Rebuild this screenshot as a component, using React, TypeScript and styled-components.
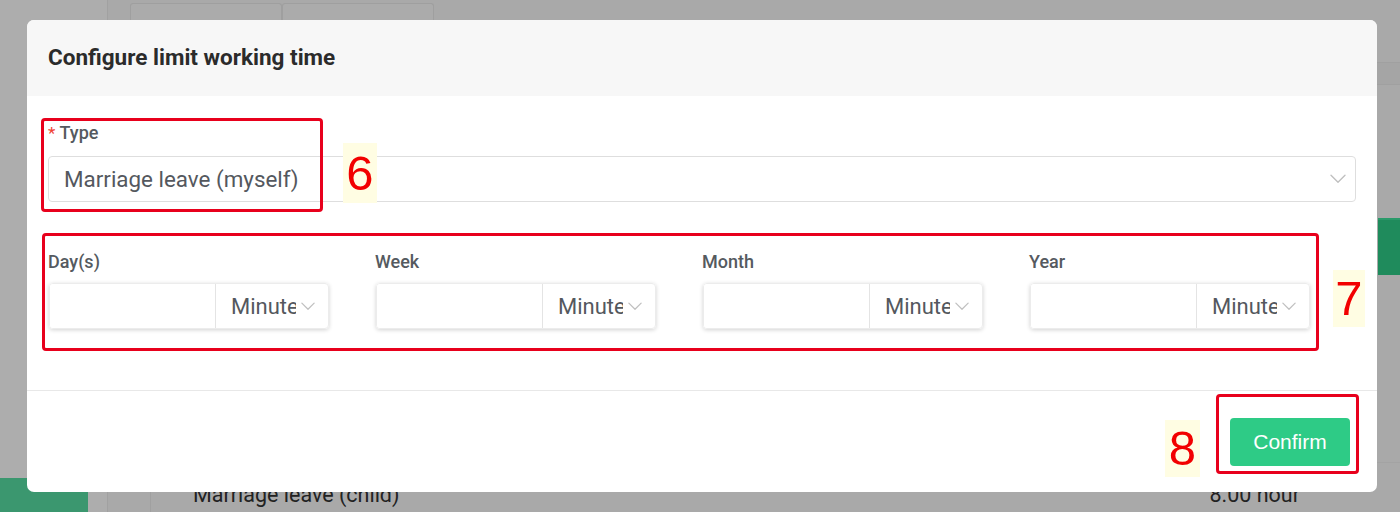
import React from "react";
import styled, { createGlobalStyle } from "styled-components";

const GlobalStyle = createGlobalStyle`
  html, body { margin: 0; padding: 0; }
  body {
    width: 1400px;
    height: 512px;
    overflow: hidden;
    background: #a9a9a9;
    font-family: Roboto, "Liberation Sans", sans-serif;
  }
  * { box-sizing: border-box; }
`;

const Page = styled.div`
  position: relative;
  width: 1400px;
  height: 512px;
  overflow: hidden;
  display: flex;
  background: #a9a9a9;
`;

const Sidebar = styled.aside`
  width: 108px;
  flex: none;
  background: #adadad;
  border-right: 1px solid #a1a1a1;
  display: flex;
  flex-direction: column;
  justify-content: flex-end;
`;

const SidebarActive = styled.div`
  width: 88px;
  height: 34px;
  background: #3b976f;
`;

const Main = styled.main`
  flex: 1;
  display: flex;
  flex-direction: column;
  padding: 3px 0 0 22px;
  min-width: 0;
`;

const Tabs = styled.div`
  display: flex;
`;

const Tab = styled.div`
  width: 152px;
  height: 30px;
  border: 1px solid #9f9f9f;
  border-bottom: none;
  border-radius: 3px 3px 0 0;
  background: #ababab;
`;

const Content = styled.div`
  flex: 1;
  display: flex;
  flex-direction: column;
  min-height: 0;
`;

const HeaderStrip = styled.div`
  margin-top: 29px;
  height: 23px;
  border-top: 1px solid #a0a0a0;
  border-bottom: 1px solid #a0a0a0;
  background: #a5a5a5;
`;

const Toolbar = styled.div`
  margin-top: 133px;
  display: flex;
  justify-content: flex-end;
`;

const AddButton = styled.div`
  width: 22px;
  height: 57px;
  background: #1f8b5c;
  border-top: 2px solid #2a9a6a;
`;

const Table = styled.div`
  margin-top: auto;
  margin-left: 20px;
  border-left: 1px solid #a0a0a0;
  display: flex;
  flex-direction: column;
`;

const TableRow = styled.div`
  height: 50px;
  display: flex;
  align-items: flex-start;
  justify-content: space-between;
  padding: 20px 100px 0 42px;
  border-top: 1px solid #a3a3a3;
  font-size: 21.5px;
  color: #222;
  line-height: 24px;
  white-space: nowrap;
`;

const Mask = styled.div`
  position: absolute;
  inset: 0;
  padding: 20px 23px 20px 27px;
  display: flex;
`;

const Modal = styled.div`
  position: relative;
  flex: 1;
  display: flex;
  flex-direction: column;
  background: #fff;
  border-radius: 7px;
  overflow: hidden;
`;

const ModalHeader = styled.header`
  height: 76px;
  flex: none;
  display: flex;
  align-items: center;
  padding: 0 21px;
  background: #f7f7f7;
`;

const Title = styled.h2`
  margin: 0;
  font-size: 22.5px;
  font-weight: 700;
  color: #2b2b2b;
  margin-top: -2px;
`;

const ModalBody = styled.div`
  flex: 1;
  padding: 25px 21px 0;
  display: flex;
  flex-direction: column;
`;

const FieldLabel = styled.label<{ $required?: boolean }>`
  display: block;
  font-size: 18px;
  font-weight: 500;
  line-height: 24px;
  color: #555a60;
  margin-bottom: ${(p) => (p.$required ? "11px" : "9px")};
  &::before {
    content: ${(p) => (p.$required ? '"* "' : '""')};
    color: #f04134;
    font-weight: 400;
    font-size: 17px;
  }
`;

const SelectBox = styled.div`
  height: 46px;
  display: flex;
  align-items: center;
  justify-content: space-between;
  padding: 0 9px 0 15px;
  border: 1px solid #dedede;
  border-radius: 4px;
  font-size: 22.4px;
  color: #54585e;
`;

const LimitsGrid = styled.div`
  margin-top: 48px;
  display: grid;
  grid-template-columns: repeat(4, 281px);
  column-gap: 46px;
`;

const InputGroup = styled.div`
  height: 46px;
  margin-left: 1px;
  display: flex;
  border: 1px solid #ececec;
  border-radius: 4px;
  box-shadow: 0 1px 4px rgba(0, 0, 0, 0.18);
  overflow: hidden;
`;

const NumberInput = styled.input`
  width: 165px;
  border: none;
  outline: none;
  font-size: 20px;
  padding: 0 12px;
  background: #fff;
`;

const UnitSelect = styled.div`
  flex: 1;
  display: flex;
  align-items: center;
  padding: 0 9px 0 15px;
  border-left: 1px solid #e4e4e4;
  font-size: 22px;
  color: #54585e;
  gap: 5px;
`;

const UnitText = styled.span`
  width: 65px;
  overflow: hidden;
  white-space: nowrap;
`;

const ModalFooter = styled.footer`
  height: 102px;
  flex: none;
  display: flex;
  align-items: center;
  justify-content: flex-end;
  padding-right: 27px;
  border-top: 1px solid #e8e8e8;
`;

const ConfirmButton = styled.button`
  width: 120px;
  height: 48px;
  border: none;
  border-radius: 4px;
  background: #2ecb86;
  color: #fff;
  font-family: "Liberation Sans", Arial, sans-serif;
  font-size: 21px;
  cursor: pointer;
`;

const Annotation = styled.div<{ $l: number; $t: number; $w: number; $h: number }>`
  position: absolute;
  left: ${(p) => p.$l}px;
  top: ${(p) => p.$t}px;
  width: ${(p) => p.$w}px;
  height: ${(p) => p.$h}px;
  border: 3px solid #e8001c;
  border-radius: 4px;
  pointer-events: none;
`;

const Tag = styled.div<{ $l: number; $t: number; $w: number; $h: number }>`
  position: absolute;
  left: ${(p) => p.$l}px;
  top: ${(p) => p.$t}px;
  width: ${(p) => p.$w}px;
  height: ${(p) => p.$h}px;
  background: #fffde3;
  color: #f20000;
  font-family: "Liberation Sans", Arial, sans-serif;
  font-size: 49px;
  line-height: 1;
  display: flex;
  align-items: center;
  justify-content: center;
`;

const Chevron = ({ w = 15 }: { w?: number }) => (
  <svg width={w} height={w * 0.6} viewBox="0 0 16 9" fill="none">
    <path d="M1 1l7 7 7-7" stroke="#c0c0c0" strokeWidth="1.4" strokeLinecap="round" strokeLinejoin="round" />
  </svg>
);

const periods = ["Day(s)", "Week", "Month", "Year"];

export default function App() {
  return (
    <>
      <GlobalStyle />
      <Page>
        <Sidebar>
          <SidebarActive />
        </Sidebar>
        <Main>
          <Tabs>
            <Tab />
            <Tab />
          </Tabs>
          <Content>
            <HeaderStrip />
            <Toolbar>
              <AddButton />
            </Toolbar>
            <Table>
              <TableRow>
                <span>Marriage leave (child)</span>
                <span>8.00 hour</span>
              </TableRow>
            </Table>
          </Content>
        </Main>

        <Mask>
          <Modal>
            <ModalHeader>
              <Title>Configure limit working time</Title>
            </ModalHeader>
            <ModalBody>
              <div>
                <FieldLabel $required>Type</FieldLabel>
                <SelectBox>
                  <span>Marriage leave (myself)</span>
                  <Chevron w={16} />
                </SelectBox>
              </div>
              <LimitsGrid>
                {periods.map((p) => (
                  <div key={p}>
                    <FieldLabel>{p}</FieldLabel>
                    <InputGroup>
                      <NumberInput type="text" />
                      <UnitSelect>
                        <UnitText>Minute</UnitText>
                        <Chevron w={14} />
                      </UnitSelect>
                    </InputGroup>
                  </div>
                ))}
              </LimitsGrid>
            </ModalBody>
            <ModalFooter>
              <ConfirmButton>Confirm</ConfirmButton>
            </ModalFooter>

            <Annotation $l={14} $t={98} $w={282} $h={94} />
            <Tag $l={316} $t={123} $w={34} $h={60}>6</Tag>
            <Annotation $l={15} $t={213} $w={1277} $h={118} />
            <Tag $l={1306} $t={250} $w={32} $h={57}>7</Tag>
            <Annotation $l={1189} $t={374} $w={143} $h={80} />
            <Tag $l={1138} $t={400} $w={35} $h={57}>8</Tag>
          </Modal>
        </Mask>
      </Page>
    </>
  );
}
